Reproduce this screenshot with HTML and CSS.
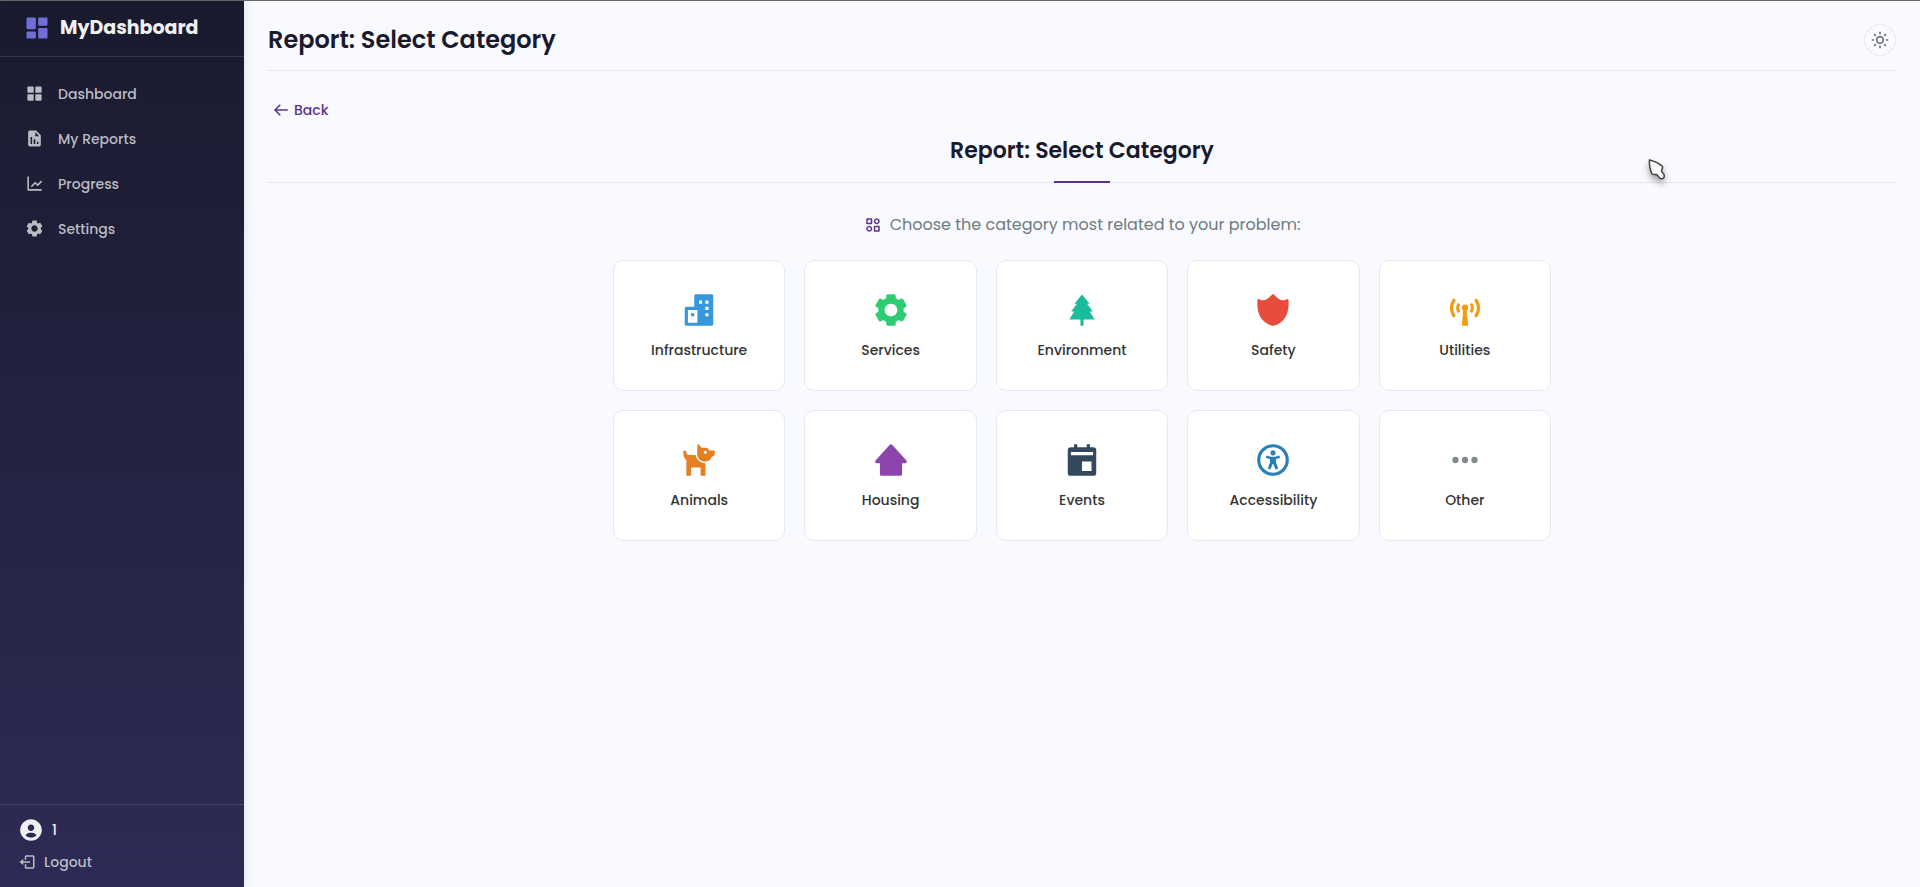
FILE: index.html
```html
<!DOCTYPE html>
<html lang="en">
<head>
<meta charset="utf-8">
<meta name="viewport" content="width=device-width, initial-scale=1">
<title>Report: Select Category</title>
<link rel="stylesheet" href="styles.css">
</head>
<body>
<div class="app">
  <aside class="sidebar">
    <div class="brand">
      <svg class="brand-icon" viewBox="0 0 24 24" aria-hidden="true"><path d="M4 13h6a1 1 0 0 0 1-1V4a1 1 0 0 0-1-1H4a1 1 0 0 0-1 1v8a1 1 0 0 0 1 1zm-1 7a1 1 0 0 0 1 1h6a1 1 0 0 0 1-1v-4a1 1 0 0 0-1-1H4a1 1 0 0 0-1 1v4zm10 0a1 1 0 0 0 1 1h6a1 1 0 0 0 1-1v-7a1 1 0 0 0-1-1h-6a1 1 0 0 0-1 1v7zm1-10h6a1 1 0 0 0 1-1V4a1 1 0 0 0-1-1h-6a1 1 0 0 0-1 1v5a1 1 0 0 0 1 1z"/></svg>
      <span class="brand-name">MyDashboard</span>
    </div>
    <nav class="nav">
      <a class="nav-link" href="#dashboard">
        <svg class="nav-icon" viewBox="0 0 24 24" aria-hidden="true"><path d="M10 3H4a1 1 0 0 0-1 1v6a1 1 0 0 0 1 1h6a1 1 0 0 0 1-1V4a1 1 0 0 0-1-1zm10 0h-6a1 1 0 0 0-1 1v6a1 1 0 0 0 1 1h6a1 1 0 0 0 1-1V4a1 1 0 0 0-1-1zM10 13H4a1 1 0 0 0-1 1v6a1 1 0 0 0 1 1h6a1 1 0 0 0 1-1v-6a1 1 0 0 0-1-1zm10 0h-6a1 1 0 0 0-1 1v6a1 1 0 0 0 1 1h6a1 1 0 0 0 1-1v-6a1 1 0 0 0-1-1z"/></svg>
        <span>Dashboard</span>
      </a>
      <a class="nav-link" href="#reports">
        <svg class="nav-icon" viewBox="0 0 24 24" aria-hidden="true"><path d="m20 8-6-6H6a2 2 0 0 0-2 2v16a2 2 0 0 0 2 2h12a2 2 0 0 0 2-2V8zM9 19H7v-9h2v9zm4 0h-2v-6h2v6zm4 0h-2v-3h2v3zM14 9h-1V4l5 5h-4z"/></svg>
        <span>My Reports</span>
      </a>
      <a class="nav-link" href="#progress">
        <svg class="nav-icon" viewBox="0 0 24 24" aria-hidden="true"><path d="M3 3v17a1 1 0 0 0 1 1h17v-2H5V3H3z"/><path d="M15.293 14.707a.999.999 0 0 0 1.414 0l5-5-1.414-1.414L16 12.586l-2.293-2.293a.999.999 0 0 0-1.414 0l-5 5 1.414 1.414L13 12.414l2.293 2.293z"/></svg>
        <span>Progress</span>
      </a>
      <a class="nav-link" href="#settings">
        <svg class="nav-icon" viewBox="0 0 24 24" aria-hidden="true"><path d="m2.344 15.271 2 3.46a1 1 0 0 0 1.366.365l1.396-.806c.58.457 1.221.832 1.895 1.112V21a1 1 0 0 0 1 1h4a1 1 0 0 0 1-1v-1.598a8.094 8.094 0 0 0 1.895-1.112l1.396.806c.477.275 1.091.11 1.366-.365l2-3.46a1.004 1.004 0 0 0-.365-1.366l-1.372-.793a7.683 7.683 0 0 0-.002-2.224l1.372-.793c.476-.275.641-.89.365-1.366l-2-3.46a1 1 0 0 0-1.366-.365l-1.396.806A8.034 8.034 0 0 0 15 4.598V3a1 1 0 0 0-1-1h-4a1 1 0 0 0-1 1v1.598A8.094 8.094 0 0 0 7.105 5.71L5.71 4.904a.999.999 0 0 0-1.366.365l-2 3.46a1.004 1.004 0 0 0 .365 1.366l1.372.793a7.683 7.683 0 0 0 0 2.224l-1.372.793c-.476.275-.641.89-.365 1.366zM12 8c2.206 0 4 1.794 4 4s-1.794 4-4 4-4-1.794-4-4 1.794-4 4-4z"/></svg>
        <span>Settings</span>
      </a>
    </nav>
    <div class="account">
      <div class="user">
        <svg class="user-icon" viewBox="0 0 24 24" aria-hidden="true"><path d="M12 2C6.579 2 2 6.579 2 12s4.579 10 10 10 10-4.579 10-10S17.421 2 12 2zm0 5c1.727 0 3 1.272 3 3s-1.273 3-3 3c-1.726 0-3-1.272-3-3s1.274-3 3-3zm-5.106 9.772c.897-1.32 2.393-2.2 4.106-2.2h2c1.714 0 3.209.88 4.106 2.2C15.828 18.14 14.015 19 12 19s-3.828-.86-5.106-2.228z"/></svg>
        <span>1</span>
      </div>
      <a class="logout" href="#logout">
        <svg class="small-icon" viewBox="0 0 24 24" aria-hidden="true"><path d="M16 13v-2H7V8l-5 4 5 4v-3z"/><path d="M20 3h-9c-1.103 0-2 .897-2 2v4h2V5h9v14h-9v-4H9v4c0 1.103.897 2 2 2h9c1.103 0 2-.897 2-2V5c0-1.103-.897-2-2-2z"/></svg>
        <span>Logout</span>
      </a>
    </div>
  </aside>

  <main class="main">
    <header class="topbar">
      <h1 class="page-title">Report: Select Category</h1>
      <button class="theme-toggle" type="button" aria-label="Toggle theme">
        <svg class="sun-icon" viewBox="0 0 24 24" aria-hidden="true"><path d="M6.993 12c0 2.761 2.246 5.007 5.007 5.007s5.007-2.246 5.007-5.007S14.761 6.993 12 6.993 6.993 9.239 6.993 12zM12 8.993c1.658 0 3.007 1.349 3.007 3.007S13.658 15.007 12 15.007 8.993 13.658 8.993 12 10.342 8.993 12 8.993zM10.998 19h2v3h-2zm0-17h2v3h-2zm-9 9h3v2h-3zm17 0h3v2h-3zM4.219 18.363l2.12-2.122 1.415 1.414-2.12 2.122zM16.24 6.344l2.122-2.122 1.414 1.414-2.122 2.122zM6.342 7.759 4.22 5.637l1.415-1.414 2.12 2.122zm13.434 10.605-1.414 1.414-2.122-2.122 1.414-1.414z"/></svg>
      </button>
    </header>

    <a class="back" href="#back">
      <svg class="small-icon" viewBox="0 0 24 24" aria-hidden="true"><path d="M21 11H6.414l5.293-5.293-1.414-1.414L2.586 12l7.707 7.707 1.414-1.414L6.414 13H21z"/></svg>
      <span>Back</span>
    </a>

    <h2 class="section-title">Report: Select Category</h2>

    <p class="prompt">
      <svg class="small-icon prompt-icon" viewBox="0 0 24 24" aria-hidden="true"><path d="M10 3H4a1 1 0 0 0-1 1v6a1 1 0 0 0 1 1h6a1 1 0 0 0 1-1V4a1 1 0 0 0-1-1zM9 9H5V5h4v4zm11 4h-6a1 1 0 0 0-1 1v6a1 1 0 0 0 1 1h6a1 1 0 0 0 1-1v-6a1 1 0 0 0-1-1zm-1 6h-4v-4h4v4zM17 3c-2.206 0-4 1.794-4 4s1.794 4 4 4 4-1.794 4-4-1.794-4-4-4zm0 6c-1.103 0-2-.897-2-2s.897-2 2-2 2 .897 2 2-.897 2-2 2zM7 13c-2.206 0-4 1.794-4 4s1.794 4 4 4 4-1.794 4-4-1.794-4-4-4zm0 6c-1.103 0-2-.897-2-2s.897-2 2-2 2 .897 2 2-.897 2-2 2z"/></svg>
      <span>Choose the category most related to your problem:</span>
    </p>

    <div class="categories">
      <button class="card infrastructure" type="button">
        <svg class="card-icon" viewBox="0 0 24 24" aria-hidden="true"><path fill-rule="evenodd" d="M20 2H10a1 1 0 0 0-1 1v7H4a1 1 0 0 0-1 1v10a1 1 0 0 0 1 1h16a1 1 0 0 0 1-1V3a1 1 0 0 0-1-1zM5 12h6v8H5zM7 14v2h2v-2zM12 6h2v2h-2zM16 6h2v2h-2zM16 10h2v2h-2zM16 14h2v2h-2z"/></svg>
        <span>Infrastructure</span>
      </button>
      <button class="card services" type="button">
        <svg class="card-icon" viewBox="0 0 24 24" aria-hidden="true"><path d="m2.344 15.271 2 3.46a1 1 0 0 0 1.366.365l1.396-.806c.58.457 1.221.832 1.895 1.112V21a1 1 0 0 0 1 1h4a1 1 0 0 0 1-1v-1.598a8.094 8.094 0 0 0 1.895-1.112l1.396.806c.477.275 1.091.11 1.366-.365l2-3.46a1.004 1.004 0 0 0-.365-1.366l-1.372-.793a7.683 7.683 0 0 0-.002-2.224l1.372-.793c.476-.275.641-.89.365-1.366l-2-3.46a1 1 0 0 0-1.366-.365l-1.396.806A8.034 8.034 0 0 0 15 4.598V3a1 1 0 0 0-1-1h-4a1 1 0 0 0-1 1v1.598A8.094 8.094 0 0 0 7.105 5.71L5.71 4.904a.999.999 0 0 0-1.366.365l-2 3.46a1.004 1.004 0 0 0 .365 1.366l1.372.793a7.683 7.683 0 0 0 0 2.224l-1.372.793c-.476.275-.641.89-.365 1.366zM12 8c2.206 0 4 1.794 4 4s-1.794 4-4 4-4-1.794-4-4 1.794-4 4-4z"/></svg>
        <span>Services</span>
      </button>
      <button class="card environment" type="button">
        <svg class="card-icon" viewBox="0 0 24 24" aria-hidden="true"><path d="M12 2.2 7.2 8h1.6l-3.7 5h2L4 18h7v4h2v-4h7l-3.1-5h2l-3.7-5h1.6z"/></svg>
        <span>Environment</span>
      </button>
      <button class="card safety" type="button">
        <svg class="card-icon" viewBox="0 0 24 24" aria-hidden="true"><path d="M12.7 2.3c1.8 2 3.8 3.6 5.8 3.6.9 0 1.7-.3 2.3-.8.4-.3 1 0 1 .4.8 10-3.5 14.8-9.4 16.4a1.5 1.5 0 0 1-.8 0C5.7 20.3 1.4 15.5 2.2 5.5c0-.4.6-.7 1-.4.6.5 1.4.8 2.3.8 2 0 4-1.6 5.8-3.6a1 1 0 0 1 1.4 0z"/></svg>
        <span>Safety</span>
      </button>
      <button class="card utilities" type="button">
        <svg class="card-icon" viewBox="0 0 24 24" aria-hidden="true"><circle cx="12" cy="10.5" r="2"/><path d="M11 11h2l1 11h-4z"/><path class="stroke" d="M5.5 5.2a8.6 8.6 0 0 0 0 11.1M8.3 8.1a4.2 4.2 0 0 0 0 5.3M18.5 5.2a8.6 8.6 0 0 1 0 11.1M15.7 8.1a4.2 4.2 0 0 1 0 5.3"/></svg>
        <span>Utilities</span>
      </button>
      <button class="card animals" type="button">
        <svg class="card-icon" viewBox="0 0 24 24" aria-hidden="true"><path fill-rule="evenodd" d="M11 2.3c0-.4.4-.5.7-.2l2 2.1h2.7c.5 0 .9.2 1.2.6L18.4 6h2.9c.5 0 .7.3.7.7v.8c0 1.5-.9 2.2-2.1 2.6-.4 1.8-1.9 2.9-4 2.9-2.9 0-5.1-2.2-5.1-5zM17 7.1a1 1 0 1 0-2 0 1 1 0 0 0 2 0z"/><path d="M2 7.1C2 6.5 2.4 6 3 6s.9.4 1 1c.1 1.2.7 1.9 1.9 1.9h4c.4 2.9 2.8 5.1 6.2 5.2V22H13v-5.2H7V22H4v-9.8C2.8 11.2 2 9.2 2 7.1z"/></svg>
        <span>Animals</span>
      </button>
      <button class="card housing" type="button">
        <svg class="card-icon" viewBox="0 0 24 24" aria-hidden="true"><path d="m21.743 12.331-9-10c-.379-.422-1.107-.422-1.486 0l-9 10a.998.998 0 0 0-.17 1.076c.16.361.518.593.913.593h2v7a1 1 0 0 0 1 1h12a1 1 0 0 0 1-1v-7h2a.998.998 0 0 0 .743-1.669z"/></svg>
        <span>Housing</span>
      </button>
      <button class="card events" type="button">
        <svg class="card-icon" viewBox="0 0 24 24" aria-hidden="true"><path fill-rule="evenodd" d="M7 2h2v2h6V2h2v2h2a2 2 0 0 1 2 2v14a2 2 0 0 1-2 2H5a2 2 0 0 1-2-2V6a2 2 0 0 1 2-2h2zM5 7v2h14V7zM12 13v6h6v-6z"/></svg>
        <span>Events</span>
      </button>
      <button class="card accessibility" type="button">
        <svg class="card-icon" viewBox="0 0 24 24" aria-hidden="true"><circle class="stroke" cx="12" cy="12" r="9"/><circle cx="12" cy="7.5" r="1.6"/><path d="m8 9.2 2.7.8h2.6l2.7-.8.5 1.4-2.6 1v2l1.4 3.7-1.7.7-1.4-3.5h-.4L10.4 18l-1.7-.7 1.4-3.7v-2l-2.6-1z"/></svg>
        <span>Accessibility</span>
      </button>
      <button class="card other" type="button">
        <svg class="card-icon" viewBox="0 0 24 24" aria-hidden="true"><circle cx="6" cy="12" r="2"/><circle cx="12" cy="12" r="2"/><circle cx="18" cy="12" r="2"/></svg>
        <span>Other</span>
      </button>
    </div>
  </main>
</div>
<svg class="pointer" viewBox="0 0 18 24" aria-hidden="true"><path d="M1.5 2C6 3 11.5 5.5 14.5 8.5c.8 1.5-.8 3-1 4.5.5 1.5 2.5 2.5 2.8 4.5.2 2-1.3 3.5-3.3 3.3-2-.3-2.500-3-4-4-1.500-.5-3.500.2-5-.8C2.500 12.500 1 6.500 1.500 2z"/></svg>
</body>
</html>
```

FILE: styles.css
```css
:root {
  --ink: #1a1a2e;
  --purple: #5a3390;
  --surface: #f9faff;
  --line: #e6e8ee;
}

* {
  box-sizing: border-box;
}

body {
  margin: 0;
  font-family: Poppins, Inter, sans-serif;
  font-size: 14px;
  line-height: 22px;
  color: var(--ink);
  background: var(--surface);
}

svg {
  display: block;
  flex: none;
  fill: currentColor;
}

a {
  color: inherit;
  text-decoration: none;
}

h1,
h2,
p {
  margin: 0;
}

button {
  font: inherit;
  cursor: pointer;
}

.app {
  display: flex;
  min-height: 100vh;
  border-top: 1px solid #66666b;
}

/* Sidebar */
.sidebar {
  display: flex;
  flex-direction: column;
  flex: none;
  width: 244px;
  color: #bbbbc4;
  background: linear-gradient(180deg, #1a1a2e, #2d2b55);
  box-shadow: 2px 0 10px rgba(0, 0, 0, 0.08);
}

.brand {
  display: flex;
  align-items: center;
  gap: 9px;
  height: 56px;
  padding: 0 23px 2px;
  border-bottom: 1px solid rgba(255, 255, 255, 0.12);
}

.brand-icon {
  width: 28px;
  height: 28px;
  color: #706ed6;
}

.brand-name {
  font-size: 19px;
  font-weight: 700;
  color: #f0f0f0;
}

.nav {
  display: flex;
  flex-direction: column;
  flex: 1;
  padding-top: 14px;
}

.nav-link {
  display: flex;
  align-items: center;
  gap: 14px;
  height: 45px;
  padding: 0 25px;
  font-weight: 500;
}

.nav-icon {
  width: 19px;
  height: 19px;
}

.account {
  display: flex;
  flex-direction: column;
  gap: 8px;
  padding: 12px 18px 14px;
  border-top: 1px solid rgba(255, 255, 255, 0.12);
  font-weight: 500;
}

.user,
.logout {
  display: flex;
  align-items: center;
  gap: 8px;
}

.user {
  color: #f0f0f0;
}

.user-icon {
  width: 26px;
  height: 26px;
}

.small-icon {
  width: 18px;
  height: 18px;
}

/* Content */
.main {
  flex: 1;
  min-width: 0;
  padding: 0 24px 24px;
}

.topbar {
  display: flex;
  align-items: center;
  justify-content: space-between;
  height: 70px;
  padding-top: 8px;
  border-bottom: 1px solid var(--line);
}

.page-title {
  font-size: 24px;
  line-height: 32px;
  font-weight: 600;
}

.theme-toggle {
  display: grid;
  place-items: center;
  width: 32px;
  height: 32px;
  padding: 0;
  color: #6c757d;
  background: none;
  border: 1px solid var(--line);
  border-radius: 50%;
}

.sun-icon {
  width: 20px;
  height: 20px;
}

.back {
  display: inline-flex;
  align-items: center;
  gap: 4px;
  margin-top: 28px;
  padding-left: 4px;
  font-weight: 500;
  color: var(--purple);
}

.section-title {
  display: flex;
  flex-direction: column;
  align-items: center;
  gap: 12px;
  margin-top: 8px;
  border-bottom: 1px solid var(--line);
  font-size: 22px;
  line-height: 36px;
  font-weight: 600;
}

.section-title::after {
  content: "";
  width: 56px;
  height: 2px;
  margin-bottom: -1px;
  background: var(--purple);
}

.prompt {
  display: flex;
  align-items: center;
  justify-content: center;
  gap: 8px;
  margin-top: 30px;
  font-size: 16px;
  line-height: 24px;
  color: #6f7b80;
}

.prompt-icon {
  color: var(--purple);
}

.categories {
  display: grid;
  grid-template-columns: repeat(5, 1fr);
  gap: 19px;
  max-width: 938px;
  margin: 23px auto 0;
}

.card {
  display: flex;
  flex-direction: column;
  align-items: center;
  gap: 10px;
  padding: 30px 8px 29px;
  color: #333333;
  font-weight: 500;
  background: #ffffff;
  border: 1px solid #e6e8f3;
  border-radius: 10px;
}

.card-icon {
  width: 38px;
  height: 38px;
}

.stroke {
  fill: none;
  stroke: currentColor;
  stroke-width: 2;
}

.infrastructure .card-icon { color: #3498db; }
.services .card-icon { color: #2ecc71; }
.environment .card-icon { color: #1abc9c; }
.safety .card-icon { color: #e74c3c; }
.utilities .card-icon { color: #f39c12; }
.animals .card-icon { color: #e67e22; }
.housing .card-icon { color: #8e44ad; }
.events .card-icon { color: #34495e; }
.accessibility .card-icon { color: #2980b9; }
.other .card-icon { color: #7f8c8d; }

.pointer {
  position: absolute;
  top: 158px;
  left: 1648px;
  width: 18px;
  height: 24px;
  overflow: visible;
  fill: #fbfbfb;
  stroke: #444444;
  stroke-width: 1.5;
  filter: drop-shadow(0 4px 3px rgba(0, 0, 0, 0.35));
  pointer-events: none;
}
```
